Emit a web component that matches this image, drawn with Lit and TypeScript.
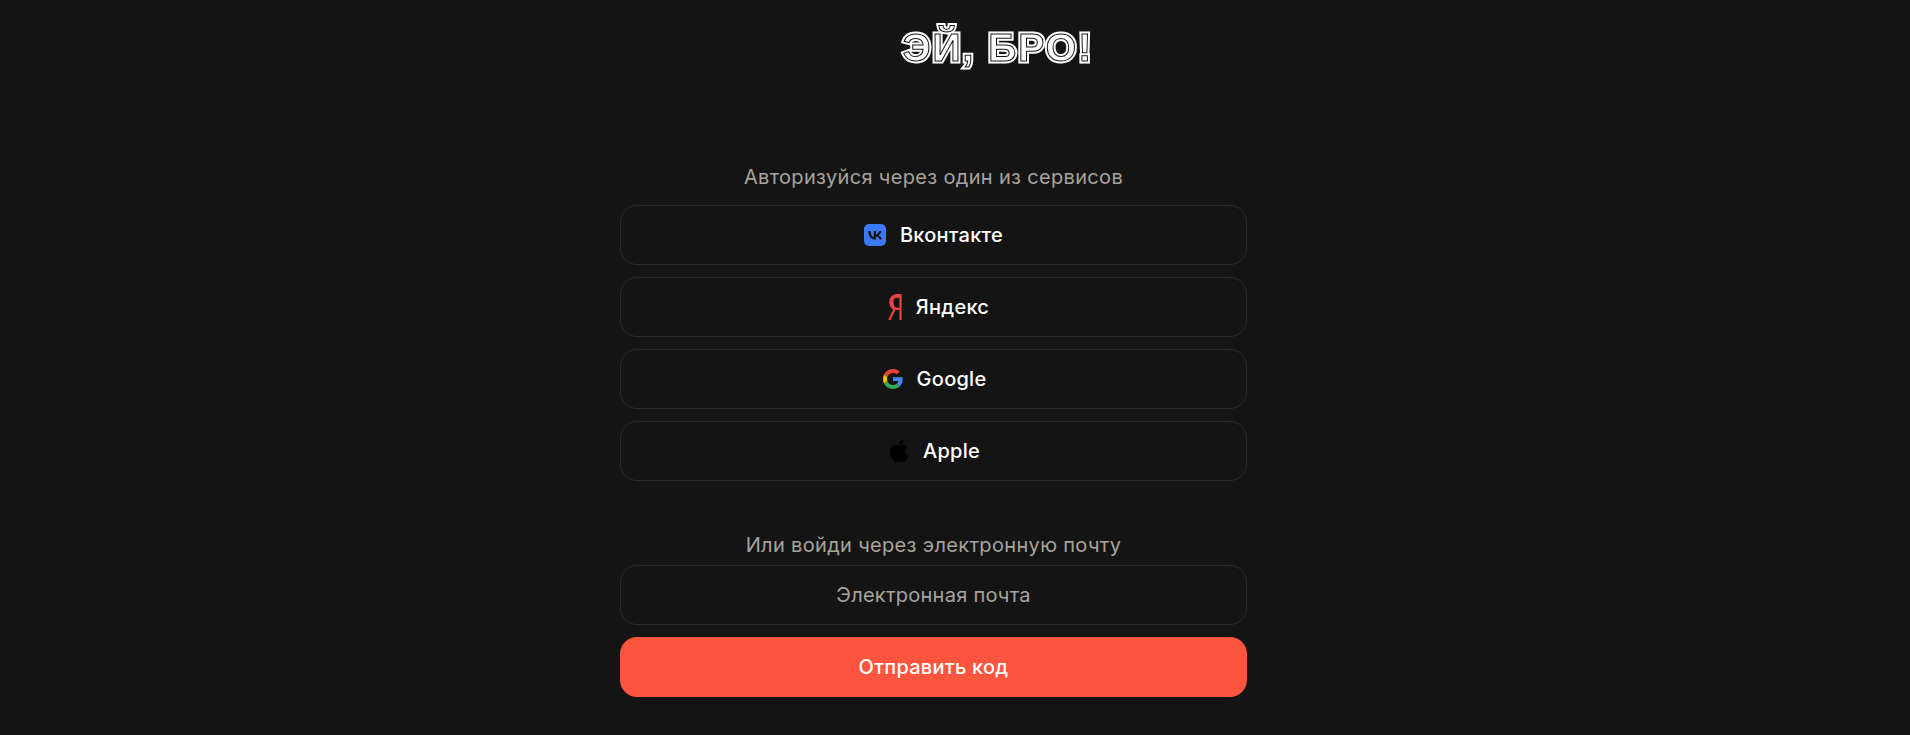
import { LitElement, html, css } from "lit";
import { customElement } from "lit/decorators.js";

const vk = html`<svg class="ico" width="22" height="22" viewBox="0 0 22 22"><rect width="22" height="22" rx="5" fill="#3a7bf5"/><path d="M11.700 15.600C7 15.600 4.300 12.400 4.200 7h2.400c.1 4 1.800 5.600 3.200 6V7h2.200v3.400c1.400-.1 2.800-1.700 3.300-3.400h2.200c-.4 2.100-1.900 3.700-3 4.300 1.100.5 2.800 1.900 3.500 4.300h-2.400c-.5-1.600-1.800-2.800-3.600-3v3h-.3z" fill="#141414"/></svg>`;
const ya = html`<svg class="ico" width="24" height="28" viewBox="-10 0 24 28"><path d="M12.500 27V2.200H9.300C5 2.200 2.300 4.900 2.300 8.900c0 3.300 1.500 5.400 4.300 7.200L1.300 27M12.500 15.900H9C6 15.900 4.300 13 4.300 9c0-3.800 1.900-5.300 5-5.300h3.200" fill="none" stroke="#ea4344" stroke-width="2.200"/></svg>`;
const g = html`<svg class="ico" width="22" height="22" viewBox="-4.800 -2.400 52.800 52.800"><path fill="#EA4335" d="M24 9.500c3.500 0 6.700 1.200 9.200 3.600l6.900-6.900C35.900 2.400 30.500 0 24 0 14.600 0 6.500 5.400 2.600 13.200l8 6.200C12.500 13.700 17.800 9.500 24 9.500z"/><path fill="#4285F4" d="M47 24.500c0-1.600-.1-3.100-.4-4.500H24v9h12.900c-.6 3-2.200 5.500-4.800 7.200l7.700 6C44.300 38 47 31.800 47 24.500z"/><path fill="#FBBC05" d="M10.500 28.600c-.5-1.400-.8-3-.8-4.600s.3-3.200.8-4.600l-8-6.200C.9 16.500 0 20.100 0 24s.9 7.500 2.600 10.800z"/><path fill="#34A853" d="M24 48c6.500 0 11.900-2.100 15.900-5.800l-7.700-6c-2.200 1.500-4.900 2.300-8.200 2.300-6.200 0-11.500-4.200-13.400-9.900l-8 6.200C6.500 42.600 14.600 48 24 48z"/></svg>`;
const ap = html`<svg class="ico" width="22" height="24" viewBox="-2 0 22 24"><path fill="#000" d="M16.500 22.300c-1.200 1.200-2.500 1-3.700.4-1.300-.6-2.500-.6-3.900 0-1.700.8-2.600.6-3.700-.4C-1 15.900 0 6.300 6.600 5.900c1.600.1 2.700 1 3.700 1 1.400-.3 2.800-1.200 4.300-1.100 1.800.2 3.200.9 4.100 2.300-3.700 2.300-2.900 7.500.6 8.900-.7 1.900-1.600 3.800-2.800 5.300zM10.200 5.800C10 3 12.200.7 14.700.4c.4 3.200-2.800 5.700-4.500 5.400z"/></svg>`;

@customElement("app-root")
export class AppRoot extends LitElement {
  static styles = css`
    :host { display: block; height: 735px; background: #141414; font-family: Inter, "Noto Sans", sans-serif; overflow: hidden; }
    .titlewrap { display: flex; justify-content: center; height: 165px; padding: 23px 0 0 86px; box-sizing: border-box; }
    .title { position: relative; margin: 0; font: 900 39px/50px "Liberation Sans", sans-serif; letter-spacing: 2px; color: #fff; -webkit-text-stroke: 5px #fff; height: 50px; will-change: opacity; }
    .title::after { content: attr(data-t); position: absolute; left: 0; top: 0; color: #fff; -webkit-text-stroke: 1px #141414; }
    .col { width: 627px; margin-left: 620px; display: flex; flex-direction: column; }
    .label { font-size: 20px; line-height: 24px; color: #a8a49c; text-align: center; margin-bottom: 16px; letter-spacing: .33px; }
    .label2 { margin-bottom: 8px; }
    .stack { display: flex; flex-direction: column; gap: 12px; }
    .btn { height: 60px; box-sizing: border-box; border: 1px solid #2a2a2a; border-radius: 17px; display: flex; align-items: center; justify-content: center; gap: 14px; color: #fff; font-size: 20px; font-weight: 500; letter-spacing: .25px; }
    .ico { display: block; flex: none; }
    .gap { height: 52px; }
    .input { color: #a8a49c; font-weight: 400; }
    .send { border: none; background: #ff553e; }
  `;
  render() {
    return html`
      <div class="titlewrap"><h1 class="title" data-t="ЭЙ, БРО!">ЭЙ, БРО!</h1></div>
      <div class="col">
        <div class="label">Авторизуйся через один из сервисов</div>
        <div class="stack">
          <div class="btn">${vk}<span>Вконтакте</span></div>
          <div class="btn">${ya}<span>Яндекс</span></div>
          <div class="btn">${g}<span>Google</span></div>
          <div class="btn">${ap}<span>Apple</span></div>
        </div>
        <div class="gap"></div>
        <div class="label label2">Или войди через электронную почту</div>
        <div class="stack">
          <div class="btn input">Электронная почта</div>
          <div class="btn send">Отправить код</div>
        </div>
      </div>`;
  }
}
